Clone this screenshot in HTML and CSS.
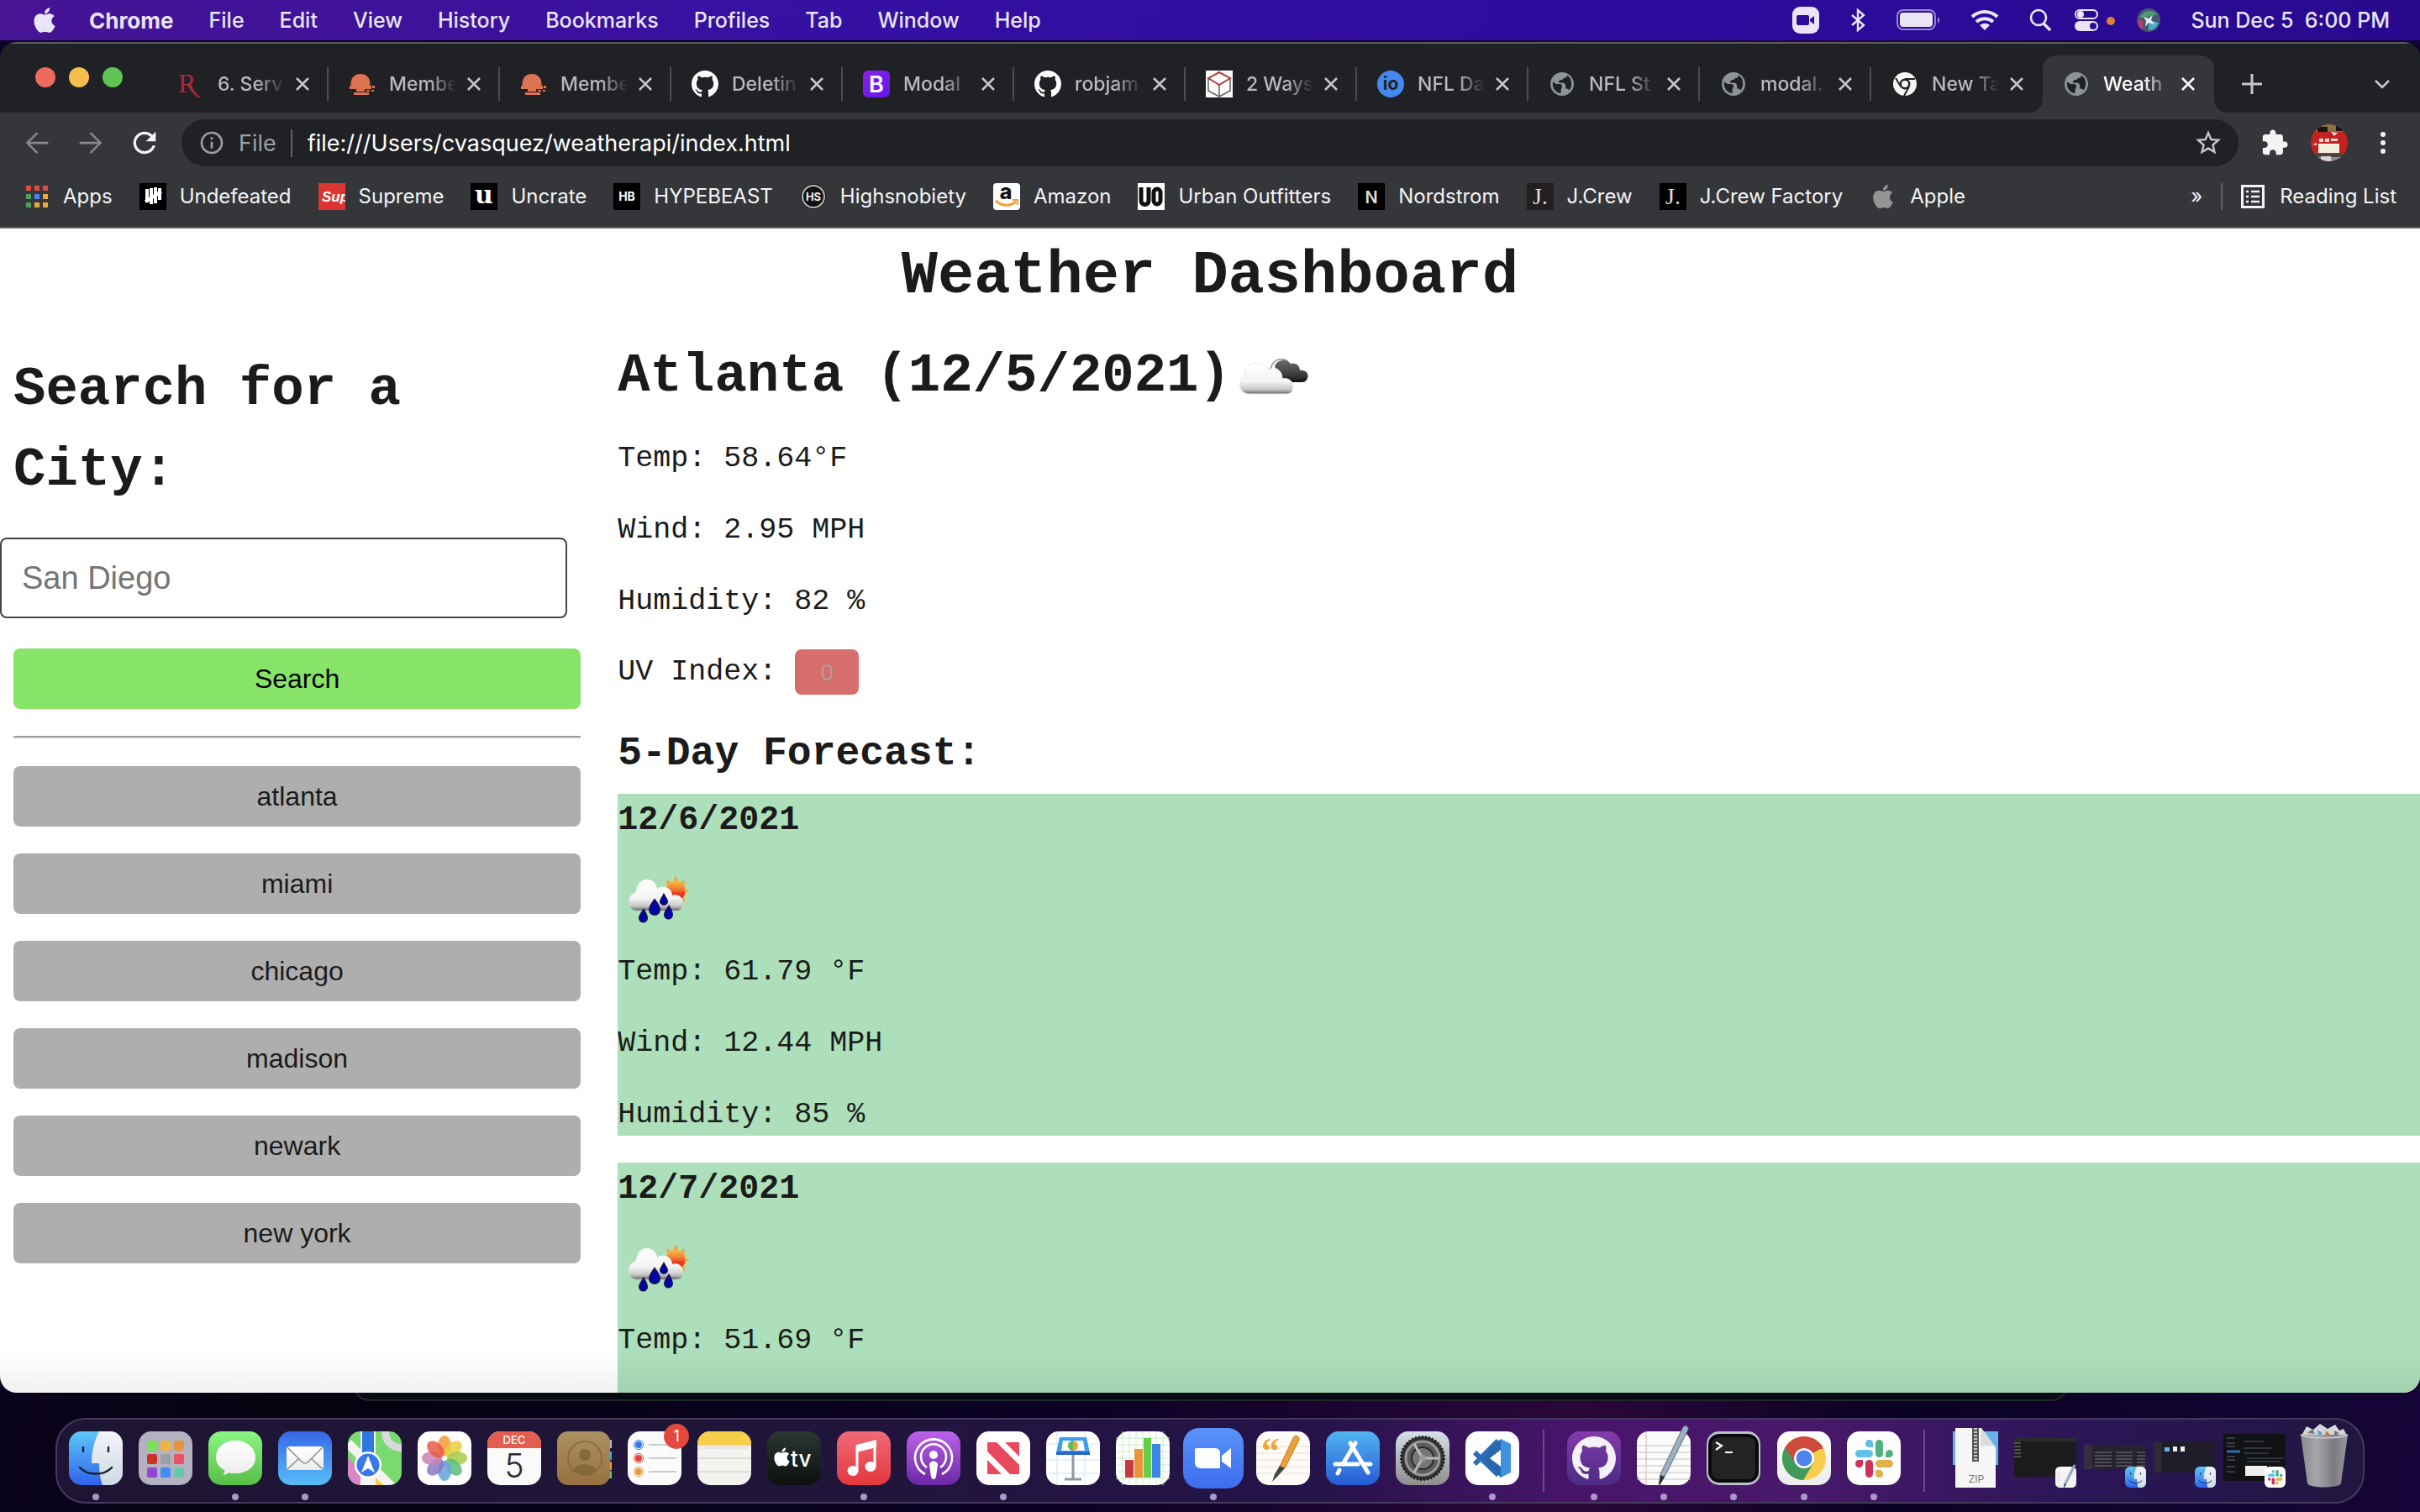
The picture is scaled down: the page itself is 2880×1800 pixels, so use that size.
FILE: index.html
```html
<!DOCTYPE html>
<html lang="en">
<head>
<meta charset="utf-8">
<title>Weather Dashboard</title>
<link rel="stylesheet" href="styles.css">
</head>
<body>
<svg class="sprite" aria-hidden="true">
  <defs>
    <linearGradient id="g-finder" x2="0" y2="1"><stop stop-color="#5ec8f8"/><stop offset="1" stop-color="#2f63ea"/></linearGradient>
    <linearGradient id="g-face" x2="0" y2="1"><stop stop-color="#f4f4f8"/><stop offset="1" stop-color="#cfdae6"/></linearGradient>
    <linearGradient id="g-green" x2="0" y2="1"><stop stop-color="#8cf685"/><stop offset="1" stop-color="#55bf45"/></linearGradient>
    <linearGradient id="g-white" x2="0" y2="1"><stop stop-color="#fff"/><stop offset="1" stop-color="#ececec"/></linearGradient>
    <linearGradient id="g-mail" x2="0" y2="1"><stop stop-color="#3767e8"/><stop offset="1" stop-color="#58bdf6"/></linearGradient>
    <linearGradient id="g-red" x2="0" y2="1"><stop stop-color="#ef6a78"/><stop offset="1" stop-color="#e3373d"/></linearGradient>
    <linearGradient id="g-purple" x2="0" y2="1"><stop stop-color="#bb63ea"/><stop offset="1" stop-color="#6a27a6"/></linearGradient>
    <linearGradient id="g-store" x2="0" y2="1"><stop stop-color="#52b5f0"/><stop offset="1" stop-color="#255bd6"/></linearGradient>
    <linearGradient id="g-zoom" x2="0" y2="1"><stop stop-color="#5a92f8"/><stop offset="1" stop-color="#3c6eef"/></linearGradient>
    <linearGradient id="g-prefs" x2="0" y2="1"><stop stop-color="#d5e0ea"/><stop offset="1" stop-color="#8e8d8b"/></linearGradient>
    <linearGradient id="g-git" x2="0" y2="1"><stop stop-color="#843bab"/><stop offset="1" stop-color="#4a2b83"/></linearGradient>
    <linearGradient id="g-tv" x2="0" y2="1"><stop stop-color="#2a3731"/><stop offset="1" stop-color="#0c0f0e"/></linearGradient>
    <linearGradient id="g-brown" x2="0" y2="1"><stop stop-color="#ac9062"/><stop offset="1" stop-color="#98713f"/></linearGradient>
    <linearGradient id="g-boot" x2="1" y2="1"><stop stop-color="#8a22ee"/><stop offset="1" stop-color="#6316e6"/></linearGradient>
    <linearGradient id="g-trash"><stop stop-color="#8b8b90"/><stop offset=".35" stop-color="#a5a5aa"/><stop offset=".7" stop-color="#7a7a80"/><stop offset="1" stop-color="#98989d"/></linearGradient>
    <linearGradient id="g-cloud" x2="0" y2="1"><stop stop-color="#fff"/><stop offset=".6" stop-color="#f4f4f4"/><stop offset=".85" stop-color="#c8c8c8"/><stop offset="1" stop-color="#6a6a6a"/></linearGradient>
    <linearGradient id="g-dark" x2="0" y2="1"><stop stop-color="#6a6a6a"/><stop offset=".7" stop-color="#3a3a3a"/><stop offset="1" stop-color="#111"/></linearGradient>
    <linearGradient id="g-sun" x2="0" y2="1"><stop stop-color="#f6c040"/><stop offset=".45" stop-color="#f07030"/><stop offset=".6" stop-color="#ea3a22"/><stop offset="1" stop-color="#e8301e"/></linearGradient>
    <radialGradient id="g-siri"><stop stop-color="#fff"/><stop offset=".35" stop-color="#8fb4d8"/><stop offset=".7" stop-color="#4d5a86"/><stop offset="1" stop-color="#3b5a58"/></radialGradient>
    <clipPath id="c-app"><rect width="64" height="64" rx="15"/></clipPath>
    <clipPath id="c-circle"><circle cx="22" cy="22" r="22"/></clipPath>
  </defs>

  <symbol id="apple" viewBox="0 0 384 512"><path d="M318.7 268.7c-.2-36.7 16.4-64.4 50-84.8-18.8-26.9-47.2-41.7-84.7-44.6-35.5-2.8-74.3 20.7-88.5 20.7-15 0-49.4-19.7-76.4-19.7C63.3 141.2 4 184.8 4 273.5q0 39.3 14.4 81.2c12.8 36.7 59 126.7 107.2 125.2 25.2-.6 43-17.9 75.8-17.9 31.8 0 48.3 17.9 76.4 17.9 48.6-.7 90.4-82.5 102.6-119.3-65.2-30.7-61.7-90-61.7-91.9zm-56.6-164.2c27.3-32.4 24.8-61.9 24-72.5-24.1 1.4-52 16.4-67.9 34.9-17.5 19.8-27.8 44.3-25.6 71.9 26.1 2 49.9-11.4 69.5-34.3z"/></symbol>
  <symbol id="github" viewBox="0 0 16 16"><path d="M8 0C3.58 0 0 3.58 0 8c0 3.54 2.29 6.53 5.47 7.59.4.07.55-.17.55-.38 0-.19-.01-.82-.01-1.49-2.01.37-2.53-.49-2.69-.94-.09-.23-.48-.94-.82-1.13-.28-.15-.68-.52-.01-.53.63-.01 1.08.58 1.23.82.72 1.21 1.87.87 2.33.66.07-.52.28-.87.51-1.07-1.78-.2-3.64-.89-3.64-3.95 0-.87.31-1.59.82-2.15-.08-.2-.36-1.02.08-2.12 0 0 .67-.21 2.2.82.64-.18 1.32-.27 2-.27.68 0 1.36.09 2 .27 1.53-1.04 2.2-.82 2.2-.82.44 1.1.16 1.92.08 2.12.51.56.82 1.27.82 2.15 0 3.07-1.87 3.75-3.65 3.95.29.25.54.73.54 1.48 0 1.07-.01 1.93-.01 2.2 0 .21.15.46.55.38A8.013 8.013 0 0016 8c0-4.42-3.58-8-8-8z"/></symbol>
  <symbol id="globe" viewBox="2 2 20 20"><path fill="#8d9399" d="M12 2C6.48 2 2 6.48 2 12s4.480 10 10 10 10-4.480 10-10S17.520 2 12 2z"/><path fill="#202124" d="M11 19.930c-3.950-.49-7-3.850-7-7.930 0-.62.080-1.210.21-1.790L7 12l3 0c1.500 0 2 1 2 2 0 1.500-1 2-1 3zM17.900 17.390c-.26-.81-1-1.390-1.900-1.390h-1v-2c0-2-1-3-3-3H9c0-1.500 1-2.500 2.500-2.500 1 0 1.500-.5 1.500-1.500h1c1.100 0 2-.9 2-2v-.41c2.930 1.190 4 4.060 4 7.410 0 2.080-.8 3.970-2.100 5.390z"/></symbol>
  <symbol id="close" viewBox="0 0 18 18"><path d="M2 2l14 14M16 2L2 16" fill="none" stroke="currentColor" stroke-width="2.6"/></symbol>
  <symbol id="sunrise" viewBox="0 0 32 32"><path fill="#dd7350" d="M3 20C1 10 6 4 14 4s13 6 11 16H3zM1 18h26v4H1zM28 18h3v3h-3zM9 22h10v3H9zM21 23h4v2h-4zM27 23h3v2h-3zM6 26h18v3H6z"/></symbol>

  <symbol id="cloudy" viewBox="0 0 100 100">
    <path fill="none" stroke="#8c8c8c" stroke-width="1.500" d="M45 42c3-1 3-4 4-6 4-7 14-9 19-3"/>
    <path fill="url(#g-dark)" d="M52 38c3-8 14-10 19-3 6-2 11 2 11 8 7-1 11 4 9 9-1 4-4 5-7 5H70c-3-3-6-4-9-3 0-6-3-9-6-10z"/>
    <path fill="url(#g-cloud)" stroke="#ededed" d="M22 71C9 71 7 55 15 51c1-11 7-17 16-17 7 0 11 3 13 9 6-6 17-2 17 10 8-2 13 4 13 9 0 6-3 9-8 9z"/>
  </symbol>
  <symbol id="showers" viewBox="0 0 100 100">
    <path fill="#f0a63e" d="M69 25l3 7-6 0zM79 30l1 8-6-4zM86 44l-8 3v-6zM80 58l-6-5 5-5zM58 30l6 4-5 4z"/>
    <circle cx="69" cy="44" r="12" fill="url(#g-sun)" stroke="#f0c050"/>
    <path fill="url(#g-cloud)" d="M22 67c-9-1-12-12-6-18 2-3 5-3 6-5 1-9 6-14 13-14s11 5 12 11c8-6 18 0 18 8 7-3 13 3 13 8 0 6-3 10-8 10z"/>
    <g fill="#0202b0" stroke="#10105c" stroke-width="2"><path d="M31 66c3 5 4 7 4 10a4.500 4.500 0 01-9 0c0-3 2-5 5-10zM44 54c4 5 6 8 6 12a6 6 0 01-12 0c0-4 3-7 6-12zM55 48c2 4 4 6 4 8a3.500 3.500 0 01-8 0c0-2 2-4 4-8zM61 62c3 5 4 7 4 10a4.500 4.500 0 01-9 0c0-3 2-5 5-10z"/></g>
  </symbol>

  <symbol id="finder" viewBox="0 0 64 64"><g clip-path="url(#c-app)"><path fill="url(#g-finder)" d="M0 0h64v64H0z"/><path fill="url(#g-face)" d="M36 0c-6 12-9 24-9 38h9c0 10 1 18 4 26h24V0z"/></g><path d="M17 19v5M47 19v5M13 43c9 10 29 10 38 0" fill="none" stroke="#17202c" stroke-width="2.4" stroke-linecap="round"/></symbol>
  <symbol id="slack" viewBox="0 0 64 64"><rect width="64" height="64" rx="15" fill="#fff"/><g fill="#60c0e8"><path d="M31 19h-5a4.500 4.500 0 115-5z"/><rect x="10" y="22" width="21" height="9" rx="4.500"/></g><g fill="#53b181"><rect x="34" y="10" width="9" height="21" rx="4.500"/><path d="M46 31v-5a4.500 4.500 0 114 5z"/></g><g fill="#dfb146"><rect x="34" y="34" width="21" height="9" rx="4.500"/><path d="M34 46h5a4.500 4.500 0 11-5 5z"/></g><g fill="#cf3159"><path d="M19 34v5a4.500 4.500 0 11-5-5z"/><rect x="22" y="34" width="9" height="21" rx="4.500"/></g></symbol>
  <symbol id="textedit" viewBox="0 0 64 64" overflow="visible"><rect width="64" height="64" rx="14" fill="#fbfbfb"/><path d="M0 17h64M0 25h64M0 33h64M0 41h64M0 49h64M0 57h64" stroke="#c2c2c2"/><path d="M11 0v64" stroke="#e9b2a8"/><path d="M26 65l2-14L55-5c2-3 7-1 6 3L33 54z" fill="#9db0c2" stroke="#5f6f80"/><path d="M26 66l2-14 5 2z" fill="#333"/></symbol>
</svg>

<div class="desktop">
  <header class="menubar">
    <nav class="menus">
      <a class="menu" href="#"><svg class="apple-mark"><use href="#apple"/></svg></a>
      <a class="menu app-name" href="#">Chrome</a>
      <a class="menu" href="#">File</a>
      <a class="menu" href="#">Edit</a>
      <a class="menu" href="#">View</a>
      <a class="menu" href="#">History</a>
      <a class="menu" href="#">Bookmarks</a>
      <a class="menu" href="#">Profiles</a>
      <a class="menu" href="#">Tab</a>
      <a class="menu" href="#">Window</a>
      <a class="menu" href="#">Help</a>
    </nav>
    <div class="status">
      <svg width="32" height="32" viewBox="0 0 32 32"><rect width="32" height="32" rx="9" fill="#e9e5f6"/><rect x="5" y="10" width="15" height="12" rx="2" fill="#2c0b98"/><path d="M21 15l5-4v10l-5-4z" fill="#2c0b98"/></svg>
      <svg width="20" height="30" viewBox="0 0 20 30"><path d="M3 9l14 12-7 6V3l7 6L3 21" fill="none" stroke="#e9e5f6" stroke-width="2.4"/></svg>
      <svg width="52" height="26" viewBox="0 0 52 26"><rect x="1" y="1" width="45" height="23" rx="7" fill="none" stroke="#9a86cf" stroke-width="2"/><rect x="4" y="4" width="39" height="17" rx="4" fill="#e9e5f6"/><path d="M49 9c3 2 3 6 0 8z" fill="#9a86cf"/></svg>
      <svg width="34" height="26" viewBox="0 0 34 26"><path d="M2 9c9-8 21-8 30 0M7 15c6-5 14-5 20 0" fill="none" stroke="#e9e5f6" stroke-width="4"/><path d="M11 19c4-3 8-3 12 0l-6 6z" fill="#e9e5f6"/></svg>
      <svg width="28" height="28" viewBox="0 0 28 28"><circle cx="11" cy="11" r="9" fill="none" stroke="#e9e5f6" stroke-width="2.6"/><path d="M17 18l8 8" stroke="#e9e5f6" stroke-width="3.4"/></svg>
      <svg class="near" width="48" height="28" viewBox="0 0 48 28"><rect x="1" y="2" width="26" height="10" rx="5" fill="none" stroke="#e9e5f6" stroke-width="2"/><circle cx="7" cy="7" r="4" fill="#e9e5f6"/><rect y="15" width="28" height="12" rx="6" fill="#e9e5f6"/><circle cx="22" cy="21" r="4" fill="#2c0b98"/><circle cx="43" cy="15" r="5" fill="#d8843c"/></svg>
      <svg class="near" width="28" height="28" viewBox="0 0 28 28"><circle cx="14" cy="14" r="14" fill="#48566e"/><path d="M3 11c4-9 16-11 22-3-6-1-10 4-22 3z" fill="#4c9a74"/><path d="M1 14c6-3 9 4 5 11-3-3-5-6-5-11z" fill="#b0406c"/><path d="M14 14l12 3c-2 6-7 9-12 9z" fill="#4aaec8"/><path d="M8 10l6 2 5-4-2 6 5 5-8-2-4 5 1-7z" fill="#fff" fill-opacity=".85"/></svg>
      <time>Sun Dec 5&nbsp; 6:00 PM</time>
    </div>
  </header>

  <div class="behind"></div>

  <main class="window">
    <div class="tabs">
      <div class="lights"><i class="red"></i><i class="amber"></i><i class="green"></i></div>
      <button class="tab"><svg class="fav" viewBox="0 0 32 32"><text x="1" y="26" font-family="Liberation Serif" font-size="32" fill="#b3273a">R</text><path d="M16 17c2 8 5 13 11 15" fill="none" stroke="#b3273a" stroke-width="2"/></svg><span>6. Serv</span><svg class="x"><use href="#close"/></svg></button>
      <button class="tab"><svg class="fav"><use href="#sunrise"/></svg><span>Membe</span><svg class="x"><use href="#close"/></svg></button>
      <button class="tab"><svg class="fav"><use href="#sunrise"/></svg><span>Membe</span><svg class="x"><use href="#close"/></svg></button>
      <button class="tab"><svg class="fav" fill="#fff"><use href="#github"/></svg><span>Deletin</span><svg class="x"><use href="#close"/></svg></button>
      <button class="tab"><svg class="fav" viewBox="0 0 32 32"><rect width="32" height="32" rx="6" fill="url(#g-boot)"/><text x="16" y="26" text-anchor="middle" font-family="Inter" font-weight="600" font-size="27" fill="#fff">B</text></svg><span>Modal</span><svg class="x"><use href="#close"/></svg></button>
      <button class="tab"><svg class="fav" fill="#fff"><use href="#github"/></svg><span>robjam</span><svg class="x"><use href="#close"/></svg></button>
      <button class="tab"><svg class="fav" viewBox="0 0 32 32"><path fill="#fff" d="M0 0h32v32H0z"/><path d="M3 9v15l13 7 13-7V9M16 17v14" fill="none" stroke="#666" stroke-width="1.6"/><path d="M16 2l13 7-13 8L3 9z" fill="none" stroke="#b8423c" stroke-width="2"/></svg><span>2 Ways</span><svg class="x"><use href="#close"/></svg></button>
      <button class="tab"><svg class="fav" viewBox="0 0 32 32"><circle cx="16" cy="16" r="16" fill="#4489ef"/><text x="16" y="23" text-anchor="middle" font-family="Inter" font-weight="700" font-size="21" fill="#202124">io</text></svg><span>NFL Da</span><svg class="x"><use href="#close"/></svg></button>
      <button class="tab"><svg class="fav small"><use href="#globe"/></svg><span>NFL St</span><svg class="x"><use href="#close"/></svg></button>
      <button class="tab"><svg class="fav small"><use href="#globe"/></svg><span>modal.</span><svg class="x"><use href="#close"/></svg></button>
      <button class="tab last"><svg class="fav small" viewBox="0 0 28 28"><circle cx="14" cy="14" r="14" fill="#f4f4f4"/><circle cx="14" cy="14" r="5.2" fill="#f4f4f4" stroke="#202124" stroke-width="2.4"/><path d="M14 8h12M9 17L3 7M19 17l-6 11" stroke="#202124" stroke-width="2"/></svg><span>New Ta</span><svg class="x"><use href="#close"/></svg></button>
      <button class="tab active"><svg class="fav small"><use href="#globe"/></svg><span>Weath</span><svg class="x"><use href="#close"/></svg></button>
      <button class="new-tab" aria-label="New tab"><svg width="24" height="24" viewBox="0 0 24 24"><path d="M12 0v24M0 12h24" stroke="#c6c7c9" stroke-width="3"/></svg></button>
      <button class="tab-list" aria-label="Search tabs"><svg width="20" height="12" viewBox="0 0 20 12"><path d="M2 2l8 8 8-8" fill="none" stroke="#c6c7c9" stroke-width="2.6"/></svg></button>
    </div>

    <div class="toolbar">
      <button aria-label="Back"><svg width="40" height="40" viewBox="0 0 24 24"><path fill="#86888b" d="M20 11.300H6.900l5.900-5.900-1-1L4 12l7.800 7.800 1-1-5.900-5.900H20z"/></svg></button>
      <button aria-label="Forward"><svg width="40" height="40" viewBox="0 0 24 24"><path fill="#86888b" d="M4 11.300h13.100l-5.900-5.900 1-1L20 12l-7.800 7.800-1-1 5.900-5.900H4z"/></svg></button>
      <button aria-label="Reload"><svg width="40" height="40" viewBox="0 0 24 24"><path fill="#f4f4f5" d="M17.650 6.350C16.200 4.900 14.210 4 12 4c-4.420 0-7.990 3.580-7.990 8s3.570 8 7.990 8c3.730 0 6.840-2.550 7.730-6h-2.080c-.82 2.330-3.040 4-5.650 4-3.310 0-6-2.690-6-6s2.690-6 6-6c1.660 0 3.140.69 4.220 1.780L13 11h7V4l-2.350 2.350z"/></svg></button>
      <div class="omnibox">
        <svg width="32" height="32" viewBox="0 0 24 24"><path fill="#9aa0a6" d="M11 7h2v2h-2zm0 4h2v6h-2zm1-9C6.480 2 2 6.480 2 12s4.480 10 10 10 10-4.480 10-10S17.520 2 12 2zm0 18c-4.410 0-8-3.590-8-8s3.590-8 8-8 8 3.590 8 8-3.590 8-8 8z"/></svg>
        <label class="scheme" for="address">File</label>
        <input class="address" id="address" type="text" value="file:///Users/cvasquez/weatherapi/index.html">
        <svg width="36" height="36" viewBox="0 0 24 24"><path fill="#c6c7c9" d="M22 9.240l-7.190-.62L12 2 9.190 8.630 2 9.240l5.460 4.730L5.820 21 12 17.270 18.180 21l-1.630-7.030L22 9.240zM12 15.400l-3.760 2.270 1-4.280-3.320-2.880 4.380-.38L12 6.100l1.710 4.040 4.380.38-3.320 2.880 1 4.280L12 15.400z"/></svg>
      </div>
      <button aria-label="Extensions"><svg width="34" height="34" viewBox="0 0 24 24"><path fill="#f4f4f5" d="M20.500 11H19V7c0-1.100-.9-2-2-2h-4V3.500C13 2.120 11.880 1 10.500 1S8 2.120 8 3.500V5H4c-1.100 0-1.990.9-1.990 2v3.800H3.500c1.490 0 2.700 1.210 2.700 2.700s-1.210 2.700-2.700 2.700H2V20c0 1.100.9 2 2 2h3.800v-1.500c0-1.490 1.210-2.700 2.700-2.700 1.490 0 2.700 1.210 2.700 2.700V22H17c1.100 0 2-.9 2-2v-4h1.500c1.380 0 2.500-1.120 2.500-2.500S21.880 11 20.500 11z"/></svg></button>
      <button aria-label="Profile"><svg width="44" height="44" viewBox="0 0 44 44"><g clip-path="url(#c-circle)"><path fill="#c32222" d="M0 0h44v44H0z"/><path fill="#8d6f45" d="M6 0h32v9H6z"/><path fill="#1a1414" d="M8 3h12v6H8zM30 0h8v8h-8z"/><path fill="#e8e0d8" d="M24 9l8 1-4 4zM10 17h5v4h-5zM17 17h5v4h-5zM24 17h8v3h-8z"/><path fill="#e8e0d8" d="M2 24l5-2v3z"/><path fill="#f3efdd" d="M9 23h25v11H9z"/><path fill="#4a4340" d="M4 35h36v4H4z"/><path fill="#8c8890" d="M6 39h32v5H6z"/><path fill="#d8d4dc" d="M12 38h12v6H12z"/></g></svg></button>
      <button aria-label="Menu"><svg width="8" height="28" viewBox="0 0 8 28"><g fill="#f4f4f5"><circle cx="4" cy="4" r="3"/><circle cx="4" cy="14" r="3"/><circle cx="4" cy="24" r="3"/></g></svg></button>
    </div>

    <nav class="bookmarks">
      <a href="#" class="apps"><svg width="26" height="26" viewBox="0 0 26 26"><path fill="#e04b3d" d="M0 0h6v6H0zM10 0h6v6h-6zM20 0h6v6h-6z"/><path fill="#4ba05a" d="M0 10h6v6H0zM0 20h6v6H0z"/><path fill="#4a86ee" d="M10 10h6v6h-6z"/><path fill="#eaa83a" d="M20 10h6v6h-6zM10 20h6v6h-6zM20 20h6v6h-6z"/></svg>Apps</a>
      <a href="#"><svg viewBox="0 0 32 32"><path d="M0 0h32v32H0z"/><path d="M9 7v16M14 6v19M19 5v19M24 6v14M7 22L26 10" stroke="#fff" stroke-width="4"/></svg>Undefeated</a>
      <a href="#"><svg viewBox="0 0 32 32"><path fill="#dd3632" d="M0 0h32v32H0z"/><text x="4" y="22" font-family="Liberation Sans" font-weight="700" font-style="italic" font-size="17" fill="#fff">Sup</text></svg>Supreme</a>
      <a href="#"><svg viewBox="0 0 32 32"><path d="M0 0h32v32H0z"/><text x="16" y="24" text-anchor="middle" font-family="DejaVu Serif" font-weight="700" font-size="30" fill="#fff">u</text></svg>Uncrate</a>
      <a href="#"><svg viewBox="0 0 32 32"><path d="M0 0h32v32H0z"/><text x="16" y="21" text-anchor="middle" font-family="Inter" font-weight="700" font-size="14" fill="#fff">HB</text></svg>HYPEBEAST</a>
      <a href="#"><svg viewBox="0 0 32 32"><circle cx="16" cy="16" r="15" fill="#111"/><circle cx="16" cy="16" r="13" fill="none" stroke="#bbb" stroke-width="2"/><text x="16" y="21" text-anchor="middle" font-family="Inter" font-weight="700" font-size="13" fill="#eee">HS</text></svg>Highsnobiety</a>
      <a href="#"><svg viewBox="0 0 32 32"><rect width="32" height="32" rx="4" fill="#fff"/><text x="15" y="19" text-anchor="middle" font-family="Inter" font-weight="800" font-size="25" fill="#111">a</text><path d="M3 21c8 7 17 7 24 1" fill="none" stroke="#f0a13a" stroke-width="3"/><path d="M23 20h6v6" fill="none" stroke="#f0a13a" stroke-width="2"/></svg>Amazon</a>
      <a href="#"><svg viewBox="0 0 32 32"><path fill="#fff" d="M0 0h32v32H0z"/><path d="M4 5v16c0 6 9 6 9 0V5" fill="none" stroke="#111" stroke-width="5"/><rect x="19" y="7" width="8" height="18" rx="4" fill="none" stroke="#111" stroke-width="5"/></svg>Urban Outfitters</a>
      <a href="#"><svg viewBox="0 0 32 32"><path d="M0 0h32v32H0z"/><text x="16" y="24" text-anchor="middle" font-family="Inter" font-weight="600" font-size="20" fill="#ddd">N</text></svg>Nordstrom</a>
      <a href="#"><svg viewBox="0 0 32 32"><path fill="#231f20" d="M0 0h32v32H0z"/><text x="16" y="25" text-anchor="middle" font-family="Liberation Serif" font-size="28" fill="#ddd">J.</text></svg>J.Crew</a>
      <a href="#"><svg viewBox="0 0 32 32"><path d="M0 0h32v32H0z"/><text x="16" y="25" text-anchor="middle" font-family="Liberation Serif" font-size="28" fill="#ddd">J.</text></svg>J.Crew Factory</a>
      <a href="#"><svg fill="#949494"><use href="#apple"/></svg>Apple</a>
      <button class="more" aria-label="More bookmarks">»</button>
      <a href="#" class="reading"><svg width="28" height="28" viewBox="0 0 28 28"><path d="M1.500 1.500h25v25h-25z" fill="none" stroke="#f4f4f5" stroke-width="3"/><path d="M6 8h3M6 14h3M6 20h3M12 8h10M12 14h10M12 20h10" stroke="#f4f4f5" stroke-width="2.600"/></svg>Reading List</a>
    </nav>

    <section class="page">
      <h1>Weather Dashboard</h1>
      <div class="columns">
        <form class="search">
          <label for="city">Search for a City:</label>
          <input id="city" type="text" placeholder="San Diego">
          <button type="button" class="go">Search</button>
          <hr>
          <button type="button">atlanta</button>
          <button type="button">miami</button>
          <button type="button">chicago</button>
          <button type="button">madison</button>
          <button type="button">newark</button>
          <button type="button">new york</button>
        </form>
        <div class="weather">
          <h2>Atlanta (12/5/2021)<svg class="sky"><use href="#cloudy"/></svg></h2>
          <div class="readings">
            <p>Temp: 58.64°F</p>
            <p>Wind: 2.95 MPH</p>
            <p>Humidity: 82 %</p>
            <p class="uv-row">UV Index: <button type="button" class="uv" disabled>0</button></p>
          </div>
          <h3>5-Day Forecast:</h3>
          <div class="forecast">
            <article>
              <h4>12/6/2021</h4>
              <svg class="sky"><use href="#showers"/></svg>
              <div class="readings">
                <p>Temp: 61.79 °F</p>
                <p>Wind: 12.44 MPH</p>
                <p>Humidity: 85 %</p>
              </div>
            </article>
            <article>
              <h4>12/7/2021</h4>
              <svg class="sky"><use href="#showers"/></svg>
              <div class="readings">
                <p>Temp: 51.69 °F</p>
              </div>
            </article>
          </div>
        </div>
      </div>
    </section>
  </main>

  <footer class="dock">
    <div class="slot on"><svg class="app"><use href="#finder"/></svg></div>
    <div class="slot"><svg class="app" viewBox="0 0 64 64"><rect width="64" height="64" rx="15" fill="#b4b1c0"/><g><rect x="10" y="11" width="12" height="12" rx="2" fill="#79e254"/><rect x="26" y="11" width="12" height="12" rx="2" fill="#f0b53e"/><rect x="42" y="11" width="12" height="12" rx="2" fill="#e8923a"/><rect x="10" y="27" width="12" height="12" rx="2" fill="#cf3026"/><rect x="26" y="27" width="12" height="12" rx="2" fill="#9aa0a6"/><rect x="42" y="27" width="12" height="12" rx="2" fill="#ec5065"/><rect x="10" y="43" width="12" height="12" rx="2" fill="#9046d4"/><rect x="26" y="43" width="12" height="12" rx="2" fill="#3f8ef2"/><rect x="42" y="43" width="12" height="12" rx="2" fill="#64c9a8"/></g></svg></div>
    <div class="slot on"><svg class="app" viewBox="0 0 64 64"><rect width="64" height="64" rx="15" fill="url(#g-green)"/><path fill="url(#g-white)" d="M32 11c13 0 24 8 24 20s-11 19-24 19c-3 0-6 0-8-1-2 2-5 3-7 3 2-2 3-4 2-6-6-3-10-8-10-15C9 19 19 11 32 11z"/></svg></div>
    <div class="slot on"><svg class="app" viewBox="0 0 64 64"><rect width="64" height="64" rx="15" fill="url(#g-mail)"/><rect x="10" y="18" width="44" height="28" rx="3" fill="url(#g-white)"/><path d="M11 19l17 17c3 3 5 3 8 0l17-17M11 45l14-13M53 45L39 32" fill="none" stroke="#8d8d90" stroke-width="1.500"/></svg></div>
    <div class="slot"><svg class="app" viewBox="0 0 64 64"><g clip-path="url(#c-app)"><path fill="#7ad96f" d="M0 0h64v64H0z"/><path fill="#d987c4" d="M0 30l26 34H0z"/><path fill="#f6ce49" d="M30 64V50l18 14z"/><path d="M0 14l54 54" stroke="#f4f4f4" stroke-width="11"/><path d="M45-2c-2 14 8 22 22 22" fill="none" stroke="#d8d8de" stroke-width="9"/><path d="M24 0v64" stroke="#f4f4f4" stroke-width="18"/><path d="M24 0v34" stroke="#3077e2" stroke-width="14"/></g><circle cx="24" cy="40" r="16" fill="#fff"/><circle cx="24" cy="40" r="13.500" fill="#3878ea"/><path d="M24 29l8 20-8-5-8 5z" fill="#fff"/></svg></div>
    <div class="slot"><svg class="app" viewBox="0 0 64 64"><rect width="64" height="64" rx="15" fill="#fff"/><g fill-opacity=".85"><ellipse cx="32" cy="17" rx="8" ry="12" fill="#f29a38"/><ellipse cx="32" cy="17" rx="8" ry="12" fill="#e8cf3c" transform="rotate(45 32 32)"/><ellipse cx="32" cy="17" rx="8" ry="12" fill="#a8cf4a" transform="rotate(90 32 32)"/><ellipse cx="32" cy="17" rx="8" ry="12" fill="#5dba7e" transform="rotate(135 32 32)"/><ellipse cx="32" cy="17" rx="8" ry="12" fill="#64a5dd" transform="rotate(180 32 32)"/><ellipse cx="32" cy="17" rx="8" ry="12" fill="#8878c6" transform="rotate(225 32 32)"/><ellipse cx="32" cy="17" rx="8" ry="12" fill="#c983b4" transform="rotate(270 32 32)"/><ellipse cx="32" cy="17" rx="8" ry="12" fill="#ea5a48" transform="rotate(315 32 32)"/></g></svg></div>
    <div class="slot"><svg class="app" viewBox="0 0 64 64"><g clip-path="url(#c-app)"><path fill="#fafafa" d="M0 0h64v64H0z"/><path fill="#e35d50" d="M0 0h64v20H0z"/></g><text x="32" y="15" text-anchor="middle" font-family="Inter" font-weight="500" font-size="13" fill="#fff">DEC</text><text x="32" y="55" text-anchor="middle" font-family="Inter" font-weight="300" font-size="39" fill="#2a2a2a">5</text></svg></div>
    <div class="slot"><svg class="app" viewBox="0 0 64 64"><path fill="#b8b8b8" d="M58 10h7v10h-7z"/><path fill="#4aa8d8" d="M58 24h7v10h-7z"/><path fill="#e89a3c" d="M58 36h7v10h-7z"/><path fill="#6cc070" d="M58 47h7v9h-7z"/><rect width="63" height="64" rx="13" fill="url(#g-brown)"/><g fill="none" stroke="#86683c" stroke-width="1.500"><circle cx="33" cy="32" r="20"/></g><circle cx="33" cy="28" r="7" fill="#86683c"/><path fill="#86683c" d="M19 46c5-9 23-9 28 0-7 8-21 8-28 0z"/></svg></div>
    <div class="slot"><svg class="app" viewBox="0 0 64 64"><rect width="64" height="64" rx="15" fill="#fbfbfb"/><path d="M25 16h33M25 32h33M25 48h33" stroke="#bdbdbd" stroke-width="1.500"/><circle cx="13" cy="16" r="4" fill="#3478f0"/><circle cx="13" cy="32" r="4" fill="#de4436"/><circle cx="13" cy="48" r="4" fill="#ea9a38"/><g fill="none"><circle cx="13" cy="16" r="5.500" stroke="#3478f0"/><circle cx="13" cy="32" r="5.500" stroke="#de4436"/><circle cx="13" cy="48" r="5.500" stroke="#ea9a38"/></g></svg><span class="badge">1</span></div>
    <div class="slot"><svg class="app" viewBox="0 0 64 64"><g clip-path="url(#c-app)"><path fill="#f4f3f0" d="M0 0h64v64H0z"/><path fill="#f7cf48" d="M0 0h64v16H0z"/><path d="M0 17h64M0 32h64M0 48h64" stroke="#c9c8c4"/><path d="M2 20h60" stroke="#aaa" stroke-dasharray="1 2"/></g></svg></div>
    <div class="slot"><svg class="app" viewBox="0 0 64 64"><rect width="64" height="64" rx="15" fill="url(#g-tv)"/><svg x="7" y="18" width="21" height="25" viewBox="0 0 384 512" fill="#fff"><use href="#apple"/></svg><text x="28" y="42" font-family="Inter" font-weight="500" font-size="26" fill="#fff">tv</text></svg></div>
    <div class="slot on"><svg class="app" viewBox="0 0 64 64"><rect width="64" height="64" rx="15" fill="url(#g-red)"/><path d="M24 47V18l21-5v29" fill="none" stroke="#fff" stroke-width="3"/><path fill="#fff" d="M23 16l24-6v9l-24 6z"/><ellipse cx="19" cy="47" rx="6.500" ry="6" fill="#fff"/><ellipse cx="40" cy="42" rx="6.500" ry="6" fill="#fff"/></svg></div>
    <div class="slot"><svg class="app" viewBox="0 0 64 64"><rect width="64" height="64" rx="15" fill="url(#g-purple)"/><g fill="none" stroke="#fff" stroke-width="2.600"><path d="M22 51a22 22 0 1120 0"/><path d="M24 43a15 15 0 1116 0"/></g><circle cx="32" cy="28" r="5" fill="#fff"/><path fill="#fff" d="M27 40c0-6 10-6 10 0l-2 14c-1 4-5 4-6 0z"/></svg></div>
    <div class="slot on"><svg class="app" viewBox="0 0 64 64"><rect width="64" height="64" rx="15" fill="#fff"/><path fill="#e8495d" d="M13 13h11l27 27v11H40L13 24zM34 13h17v17zM13 34l17 17H13z"/></svg></div>
    <div class="slot"><svg class="app" viewBox="0 0 64 64"><rect width="64" height="64" rx="15" fill="#fff"/><path d="M13 0v64M46 0v64M0 34h64M0 50h64M0 15h64" stroke="#cfe2f4"/><path fill="#3c9df0" d="M16 7h32l4 19H12z"/><path fill="#2a66d0" d="M12 24h40v4H12z"/><path fill="#fff" d="M20 11h24l2 12H18z"/><circle cx="32" cy="17" r="6" fill="#e9a23c"/><path fill="#5db860" d="M32 17v-6a6 6 0 000 12z"/><path d="M32 28v28M22 57h20" stroke="#8d97a4" stroke-width="3"/></svg></div>
    <div class="slot"><svg class="app" viewBox="0 0 64 64"><rect width="64" height="64" rx="15" fill="#fff"/><path d="M8 0v64M16 0v64M24 0v64M32 0v64M40 0v64M48 0v64M56 0v64M0 8h64M0 16h64M0 24h64M0 32h64M0 40h64M0 48h64M0 56h64" stroke="#c9edc6"/><path fill="#c33a44" d="M11 34h10v21H11z"/><path fill="#e8943a" d="M22 21h10v34H22z"/><path fill="#62cf45" d="M33 8h9v47h-9z"/><path fill="#3c86ea" d="M43 15h10v40H43z"/></svg></div>
    <div class="slot on"><svg class="app big" viewBox="0 0 72 72"><rect width="72" height="72" rx="19" fill="url(#g-zoom)"/><path fill="#fff" d="M15 24h23c4 0 6 3 6 6v18H21c-4 0-7-3-7-6V25zM46 33l11-9v24l-11-8z"/></svg></div>
    <div class="slot"><svg class="app" viewBox="0 0 64 64"><rect width="64" height="64" rx="15" fill="#fdfcf9"/><path d="M0 18h64M0 26h64M0 34h64M0 42h64M0 50h64" stroke="#f1ddc4"/><text x="6" y="38" font-family="Liberation Serif" font-weight="700" font-size="44" fill="#efa53c">“</text><path fill="#eda038" stroke="#b8752a" d="M44 8c1-4 8-3 7 2L34 44l-6-2z"/><path fill="#444" d="M28 41l6 3-9 10-6 6 3-9z"/></svg></div>
    <div class="slot"><svg class="app" viewBox="0 0 64 64"><rect width="64" height="64" rx="15" fill="url(#g-store)"/><path d="M35 14L20 39M29 14l21 35M16 46l-2 4M11 39h27M46 39h7" fill="none" stroke="#fff" stroke-width="5" stroke-linecap="round"/></svg></div>
    <div class="slot"><svg class="app" viewBox="0 0 64 64"><rect width="64" height="64" rx="15" fill="url(#g-prefs)"/><circle cx="32" cy="32" r="26" fill="#3b3b3b"/><circle cx="32" cy="32" r="25" fill="none" stroke="#222" stroke-width="4" stroke-dasharray="2 2"/><circle cx="32" cy="32" r="20" fill="#5c5c5c" stroke="#999" stroke-width="3"/><circle cx="32" cy="32" r="13" fill="#777" stroke="#2b2b2b" stroke-width="2"/><path d="M32 32h20M32 32L22 15M32 32L22 49" stroke="#bbb" stroke-width="3"/><circle cx="32" cy="32" r="4" fill="#999"/></svg></div>
    <div class="slot on"><svg class="app" viewBox="0 0 64 64"><rect width="64" height="64" rx="15" fill="#fff"/><path d="M11 25l28 27M11 39l28-28" stroke="#2b6cb4" stroke-width="6"/><path fill="#3f92dd" d="M42 9l12 6v34l-12 6z"/><path fill="#2767ad" d="M42 9v13L29 32l13 10v13L26 38l-4-6 4-6z"/></svg></div>
    <i class="split"></i>
    <div class="slot on"><svg class="app" viewBox="0 0 64 64"><rect width="64" height="64" rx="15" fill="url(#g-git)"/><svg x="6" y="6" width="52" height="52" viewBox="0 0 16 16" fill="#f4f2f8"><use href="#github"/></svg></svg></div>
    <div class="slot on"><svg class="app"><use href="#textedit"/></svg></div>
    <div class="slot on"><svg class="app" viewBox="0 0 64 64"><rect width="64" height="64" rx="15" fill="#b9c3cb"/><rect x="2" y="3" width="60" height="58" rx="13" fill="#0a0a0a"/><rect x="6" y="7" width="52" height="50" rx="8" fill="#232323"/><path d="M11 13l7 4-7 5M22 25h9" fill="none" stroke="#fff" stroke-width="2.200"/></svg></div>
    <div class="slot on"><svg class="app" viewBox="0 0 64 64"><rect width="64" height="64" rx="15" fill="url(#g-white)"/><circle cx="32" cy="32" r="26" fill="#f8cf4c"/><path fill="#ce4a3c" d="M32 32L9.500 19a26 26 0 0145 0z"/><path fill="#3f9a5c" d="M32 32L9.500 19A26 26 0 0031 58l12-20z"/><path fill="#ce4a3c" d="M32 21h22.600a26 26 0 00-45-2L20 36z"/><circle cx="32" cy="32" r="12" fill="#fff"/><circle cx="32" cy="32" r="9.500" fill="#4f82ea"/></svg></div>
    <div class="slot on"><svg class="app"><use href="#slack"/></svg></div>
    <i class="split"></i>
    <div class="slot"><svg class="app tall" viewBox="0 0 64 72"><path fill="#63b4e8" d="M5 4h54v40H5z"/><path fill="#f6f6f6" d="M8 0h31l17 23v48H8z"/><path fill="#dcdcdc" d="M38 0l18 23c-8-3-14-2-18 0z"/><path d="M32 0v40" stroke="#555" stroke-width="8"/><path d="M32 0v38" stroke="#ccc" stroke-width="4" stroke-dasharray="2 2"/><text x="33" y="65" text-anchor="middle" font-family="Inter" font-size="12" fill="#777">ZIP</text></svg></div>
    <div class="slot"><svg class="app thumb" viewBox="0 0 74 72"><path fill="#1b1b1c" d="M0 12h74v46H0z"/><path fill="#2b2b2d" d="M0 12h74v4H0z"/><path d="M0 26h8M0 30h8M0 34h8M0 18h8M0 22h8" stroke="#888"/><svg x="49" y="46" width="25" height="25" viewBox="0 0 64 64" overflow="visible"><use href="#textedit"/></svg></svg></div>
    <div class="slot"><svg class="app thumb" viewBox="0 0 74 72"><path fill="#26222f" d="M0 20h74v29H0z"/><path fill="#332f3e" d="M0 20h10v29H0z"/><path d="M13 29h60M13 33h60M13 37h60M13 41h60M13 45h60" stroke="#777" stroke-dasharray="20 5"/><svg x="49" y="46" width="25" height="25" viewBox="0 0 64 64"><use href="#finder"/></svg></svg></div>
    <div class="slot"><svg class="app thumb" viewBox="0 0 74 72"><path fill="#201d2a" d="M0 16h74v37H0z"/><path fill="#2d2937" d="M0 16h10v37H0z"/><path fill="#5cb3ea" d="M13 23h6v5h-6z"/><path fill="#eee" d="M23 22h5v6h-5zM32 22h5v6h-5z"/><svg x="49" y="46" width="25" height="25" viewBox="0 0 64 64"><use href="#finder"/></svg></svg></div>
    <div class="slot"><svg class="app thumb" viewBox="0 0 74 72"><path fill="#111214" d="M0 7h74v56H0z"/><path d="M4 12h10M4 18h10M4 22h10M4 34h10M4 38h10M4 46h10M4 52h10" stroke="#666"/><path d="M4 28h16" stroke="#2d6cb0" stroke-width="3"/><path d="M24 16h24M24 24h34M24 30h30M28 36h44M28 40h40" stroke="#4d5866"/><path fill="#eee" d="M26 45h26v12H26z"/><svg x="49" y="46" width="25" height="25" viewBox="0 0 64 64"><use href="#slack"/></svg></svg></div>
    <div class="slot"><svg class="app tall" viewBox="0 0 64 72"><path fill="#d6d6da" d="M5 9l6-11 8 4 8-7 9 6 9-5 5 7 5-2 4 8z"/><path fill="#777" d="M12 6l6-5 3 6zM44 3l6 3-6 4z"/><path fill="#c8743c" d="M34 3l5 5-6 2z"/><path fill="#4fa7cf" d="M24 2l6 4-5 4z"/><path fill="url(#g-trash)" d="M4 8h56l-8 58c-2 6-38 6-40 0z"/><path d="M4 8c10 5 46 5 56 0" fill="none" stroke="#c3c3c8" stroke-width="2"/></svg></div>
  </footer>
</div>
</body>
</html>
```
FILE: styles.css
```css
* { box-sizing: border-box; }

body {
  margin: 0;
  font-family: Inter, "Liberation Sans", sans-serif;
  color: #1b1b1b;
}

button, input { font: inherit; color: inherit; border: 0; background: none; padding: 0; margin: 0; }
a { color: inherit; text-decoration: none; }
svg { display: block; flex: none; }
h1, h2, h3, h4, p { margin: 0; }
.sprite { position: absolute; width: 0; height: 0; }

.desktop {
  position: relative;
  display: flex;
  flex-direction: column;
  height: 100vh;
  overflow: hidden;
  background: linear-gradient(100deg, #0d0428 0%, #06020f 20%, #0b0226 50%, #2a0739 68%, #0a0224 80%, #150538 100%);
}

/* Menu bar */
.menubar {
  display: flex;
  justify-content: space-between;
  align-items: center;
  height: 48px;
  margin-bottom: 2px;
  padding: 0 36px 0 40px;
  background: linear-gradient(90deg, #461494, #3510a2 35%, #2c0b9c 70%, #280a8e);
  color: #e9e5f6;
  font-size: 25px;
  font-weight: 500;
}
.menus { display: flex; align-items: center; gap: 42px; }
.app-name { margin-left: -2px; font-size: 26px; font-weight: 700; }
.apple-mark { width: 26px; height: 34px; fill: #e9e5f6; }
.status { display: flex; align-items: center; gap: 36px; white-space: nowrap; }
.status .near { margin-left: -10px; }

/* Window behind the browser, only its bottom edge shows */
.behind {
  position: absolute;
  left: 420px;
  right: 419px;
  bottom: 132px;
  height: 60px;
  border: 2px solid #22262c;
  border-radius: 20px;
  background: #070b14;
}

/* Browser window */
.window {
  position: relative;
  display: flex;
  flex-direction: column;
  flex: 1;
  min-height: 0;
  overflow: hidden;
  border-radius: 20px;
  background: #35363a;
}

.tabs {
  display: flex;
  align-items: flex-end;
  height: 84px;
  background: #202124;
  border-top: 2px solid #5d5e61;
}
.lights { display: flex; gap: 16px; width: 187px; padding: 0 0 30px 42px; }
.lights i { width: 24px; height: 24px; border-radius: 50%; }
.red { background: #ed6a5e; }
.amber { background: #f4bf4f; }
.green { background: #61c554; }

.tab {
  position: relative;
  display: flex;
  align-items: center;
  flex: 0 1 204px;
  height: 68px;
  padding: 0 22px 0 24px;
  color: #b9babd;
  font-size: 23px;
  font-weight: 500;
}
.tab:not(.last):not(.active)::after {
  content: "";
  position: absolute;
  right: 0;
  top: 14px;
  width: 2px;
  height: 40px;
  background: #4c4d51;
}
.tab span {
  width: 80px;
  margin-left: 16px;
  text-align: left;
  white-space: nowrap;
  -webkit-mask-image: linear-gradient(90deg, #000 60%, transparent);
  mask-image: linear-gradient(90deg, #000 60%, transparent);
}
.fav { width: 32px; height: 32px; }
.fav.small { width: 28px; height: 28px; margin: 0 2px; }
.x { width: 18px; height: 18px; margin-left: 12px; color: #c6c7c9; }
.tab.active { background: #35363a; border-radius: 16px 16px 0 0; color: #fff; }
.tab.active .x { color: #fff; }
.tab.active::before {
  content: "";
  position: absolute;
  left: -16px;
  right: -16px;
  bottom: 0;
  height: 16px;
  background:
    radial-gradient(circle at 0 0, transparent 16px, #35363a 16px) left / 16px 16px no-repeat,
    radial-gradient(circle at 100% 0, transparent 16px, #35363a 16px) right / 16px 16px no-repeat;
}
.new-tab { padding: 0 0 22px 33px; }
.tab-list { margin-left: auto; padding: 0 35px 28px 0; }

.toolbar {
  display: flex;
  align-items: center;
  padding: 8px 40px 8px 24px;
}
.toolbar button:nth-of-type(-n+3) { margin-right: 24px; }
.omnibox {
  display: flex;
  align-items: center;
  flex: 1;
  height: 56px;
  padding: 0 18px 0 20px;
  border-radius: 28px;
  background: #202124;
  font-size: 27px;
}
.scheme { padding: 0 17px 0 16px; border-right: 2px solid #5f6165; color: #9aa0a6; }
.address { flex: 1; height: 40px; padding-left: 18px; color: #fff; }
.omnibox ~ button { margin-left: 26px; }
.omnibox ~ button:last-child { margin-left: 38px; }

.bookmarks {
  display: flex;
  align-items: center;
  gap: 32px;
  padding: 12px 28px 20px 31px;
  border-bottom: 2px solid #5d5e61;
  color: #f4f4f5;
  font-size: 24px;
  line-height: 32px;
  white-space: nowrap;
}
.bookmarks a { display: flex; align-items: center; gap: 16px; }
.bookmarks a svg:not([width]) { width: 32px; height: 32px; }
.bookmarks .apps { gap: 18px; }
.bookmarks .more { margin-left: auto; line-height: 32px; }
.bookmarks .reading { margin-left: -10px; padding-left: 22px; border-left: 2px solid #5f6165; gap: 18px; }

/* Weather page */
.page {
  position: relative;
  flex: 1;
  min-height: 0;
  overflow: hidden;
  background: #fff;
  font-family: "Courier New", "Liberation Mono", monospace;
}
.page::after {
  content: "";
  position: absolute;
  inset: auto 0 0 0;
  height: 50px;
  background: linear-gradient(transparent, rgba(0, 0, 0, .06));
}
h1 { padding-top: 4px; font-size: 72px; line-height: 106px; text-align: center; }
h2, .search label { font-size: 64px; line-height: 96px; font-weight: 700; }
h3 { padding-top: 4px; font-size: 48px; line-height: 68px; }
h4 { padding-top: 4px; font-size: 40px; line-height: 56px; }

.columns { display: grid; grid-template-columns: 24% 1fr; gap: 44px; }

.search {
  display: flex;
  flex-direction: column;
  gap: 32px;
  padding: 34px 0 0 16px;
}
.search input {
  height: 96px;
  margin: 0 16px 4px -16px;
  padding: 0 24px;
  border: 2px solid #444;
  border-radius: 8px;
  font-family: Arial, "Liberation Sans", sans-serif;
  font-size: 38px;
}
.search input::placeholder { color: #757575; opacity: 1; }
.search button {
  height: 72px;
  border-radius: 8px;
  background: #aeaeae;
  font-family: Arial, "Liberation Sans", sans-serif;
  font-size: 32px;
}
.search .go { background: #88e468; color: #000; }
.search hr { width: 100%; height: 4px; margin: 0; border: 0; border-top: 2px solid #9a9a9a; border-bottom: 2px solid #eee; }

.sky { width: 100px; height: 100px; }
h2 { display: flex; align-items: center; padding-top: 16px; }
.readings { display: grid; gap: 32px; }
.readings p { padding-top: 4px; font-size: 35px; line-height: 49px; }
.readings .uv-row { display: flex; align-items: center; gap: 22px; padding-top: 0; }
.weather > .readings { padding: 20px 0 32px; }
.uv {
  width: 76px;
  height: 54px;
  border-radius: 8px;
  background: #d66e6b;
  color: #b29c9c;
  font-family: Arial, "Liberation Sans", sans-serif;
  font-size: 28px;
}
.forecast { display: grid; gap: 32px; padding-top: 14px; }
.forecast article { background: #addfba; }
.forecast .sky { margin: 12px 0; }
.forecast article:last-child { min-height: 406px; }

/* Dock */
.dock {
  position: relative;
  display: flex;
  align-items: center;
  height: 102px;
  margin: 30px 66px 10px;
  padding: 0 4px;
  border: 2px solid #443a5c;
  border-radius: 36px;
  background: linear-gradient(90deg, #1e1534 0%, #1f1538 30%, #26134a 55%, #48156a 66%, #48186a 76%, #2a1656 88%, #20163f 100%);
}
.slot { position: relative; display: flex; justify-content: center; align-items: center; flex: 1 1 0; height: 98px; }
.slot.on::after {
  content: "";
  position: absolute;
  bottom: 2px;
  width: 8px;
  height: 8px;
  border-radius: 50%;
  background: #ab98c8;
}
.app { width: 64px; height: 64px; margin-bottom: 6px; overflow: visible; }
.app.big { width: 72px; height: 72px; }
.app.tall { height: 72px; }
.app.thumb { width: 74px; height: 72px; }
.split { width: 2px; height: 74px; margin: 0 18px; background: #6c4a8e; }
.badge {
  position: absolute;
  top: 5px;
  right: 0;
  width: 30px;
  border-radius: 15px;
  background: #e4493e;
  color: #fff;
  font-size: 18px;
  line-height: 30px;
  text-align: center;
}
```
